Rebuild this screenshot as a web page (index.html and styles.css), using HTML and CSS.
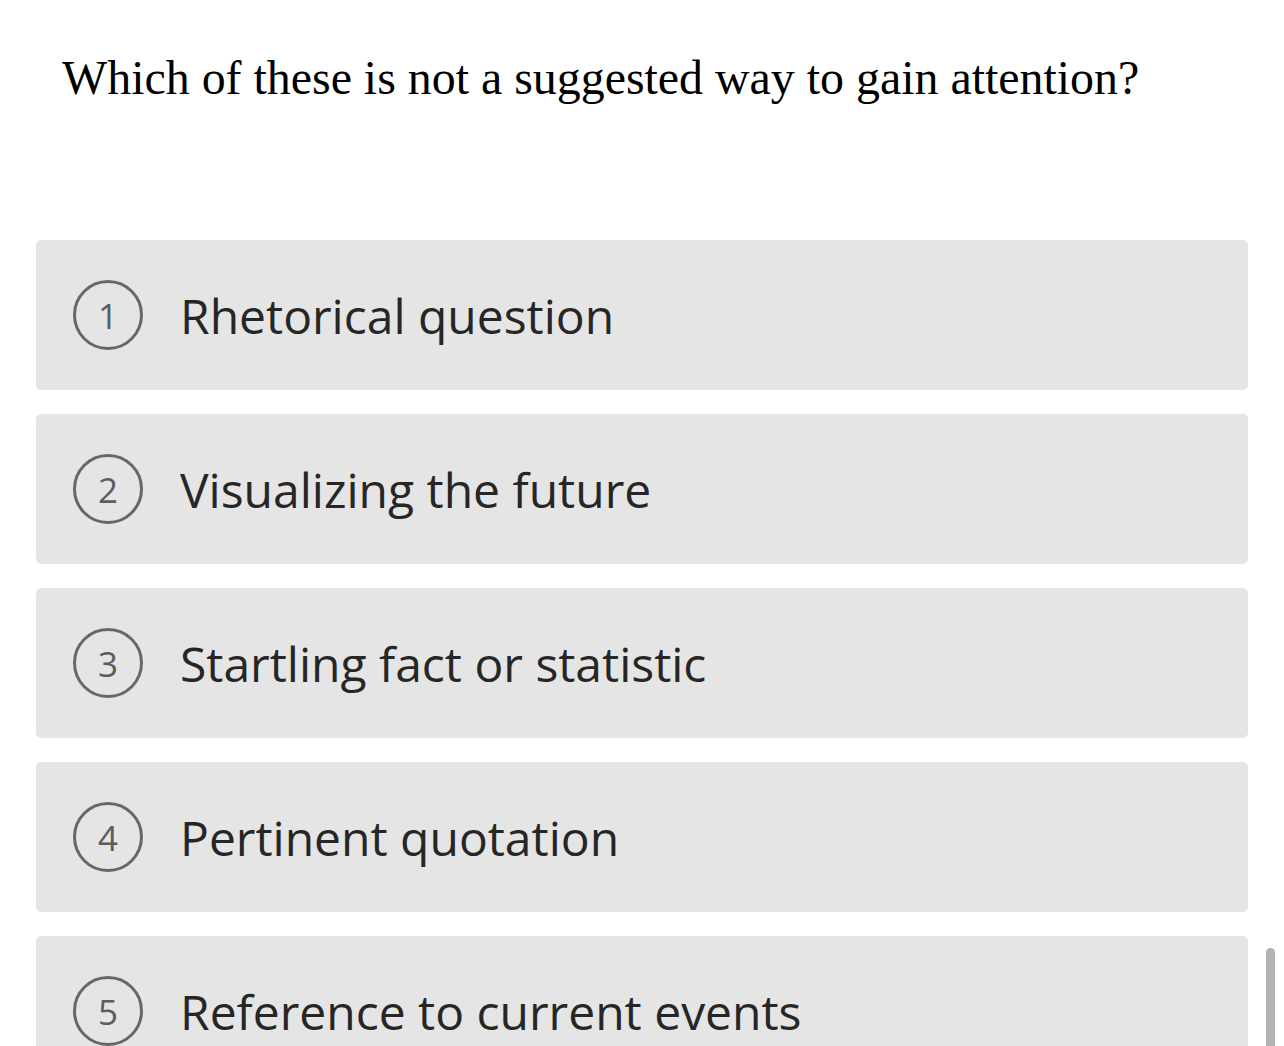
FILE: index.html
```html
<!DOCTYPE html>
<html>
<head>
<meta charset="utf-8">
<link rel="stylesheet" href="styles.css">
</head>
<body>
<div class="page">
  <h1 class="question">Which of these is not a suggested way to gain attention?</h1>
  <div class="options">
    <div class="option"><span class="num">1</span><span class="label">Rhetorical question</span></div>
    <div class="option"><span class="num">2</span><span class="label">Visualizing the future</span></div>
    <div class="option"><span class="num">3</span><span class="label">Startling fact or statistic</span></div>
    <div class="option"><span class="num">4</span><span class="label">Pertinent quotation</span></div>
    <div class="option"><span class="num">5</span><span class="label">Reference to current events</span></div>
  </div>
</div>
<div class="scrollbar"></div>
</body>
</html>
```
FILE: styles.css
```css
html, body {
  margin: 0;
  padding: 0;
  background: #ffffff;
  overflow: hidden;
  height: 1046px;
}
.page {
  padding: 0 36px;
}
.question {
  margin: 0;
  padding: 50px 0 0 26px;
  font-family: "Liberation Serif", "Times New Roman", serif;
  font-weight: normal;
  font-size: 47.9px;
  line-height: 56px;
  color: #000;
}
.options {
  margin-top: 134px;
  display: flex;
  flex-direction: column;
  gap: 24px;
}
.option {
  height: 150px;
  background: #e5e5e5;
  border-radius: 5px;
  display: flex;
  align-items: center;
  padding-left: 37px;
}
.num {
  box-sizing: border-box;
  width: 70px;
  height: 70px;
  border: 3px solid #676767;
  border-radius: 50%;
  display: flex;
  align-items: center;
  justify-content: center;
  font-family: "Open Sans", sans-serif;
  font-size: 35px;
  font-weight: 500;
  line-height: 1;
  color: #5c5c5c;
  flex: none;
}
.label {
  margin-left: 37px;
  font-family: "Open Sans", sans-serif;
  font-size: 48px;
  color: #262626;
}
.scrollbar {
  position: fixed;
  left: 1266px;
  top: 948px;
  width: 9px;
  height: 120px;
  border-radius: 5px;
  background: #b3b3b3;
}
```
